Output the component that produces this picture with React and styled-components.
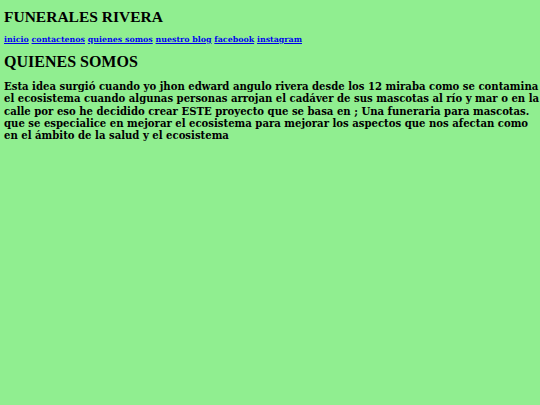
import React from 'react';
import styled, { createGlobalStyle } from 'styled-components';

const Global = createGlobalStyle`
  body {
    margin: 0;
    background: #90ee90;
  }
`;

const Page = styled.div`
  padding: 8px 0 8px 4px;
  color: #000;
  font-family: "DejaVu Serif", serif;
`;

const Title = styled.h1`
  margin: 0 0 9px;
  font-family: "Liberation Serif", serif;
  font-size: 15.5px;
  font-weight: bold;
  line-height: 18px;
`;

const Nav = styled.nav`
  font-size: 7.9px;
  font-weight: bold;
  line-height: 10px;
  margin: 0 0 7px;

  a {
    color: #0000ee;
  }
`;

const Heading = styled.h2`
  margin: 0 0 10px;
  font-family: "Liberation Serif", serif;
  font-size: 16px;
  font-weight: bold;
  line-height: 19px;
`;

const Text = styled.p`
  margin: 0;
  font-size: 10.1px;
  font-weight: bold;
  line-height: 12.3px;
`;

const links = ['inicio', 'contactenos', 'quienes somos', 'nuestro blog', 'facebook', 'instagram'];

export default function App() {
  return (
    <Page>
      <Global />
      <Title>FUNERALES RIVERA</Title>
      <Nav>
        {links.map((l, i) => (
          <React.Fragment key={l}>
            <a href="#">{l}</a>
            {i < links.length - 1 ? ' ' : ''}
          </React.Fragment>
        ))}
      </Nav>
      <Heading>QUIENES SOMOS</Heading>
      <Text>
        Esta idea surgió cuando yo jhon edward angulo rivera desde los 12 miraba como se contamina el ecosistema cuando algunas personas arrojan el cadáver de sus mascotas al río y mar o en la calle por eso he decidido crear ESTE proyecto que se basa en ; Una funeraria para mascotas. que se especialice en mejorar el ecosistema para mejorar los aspectos que nos afectan como en el ámbito de la salud y el ecosistema
      </Text>
    </Page>
  );
}
